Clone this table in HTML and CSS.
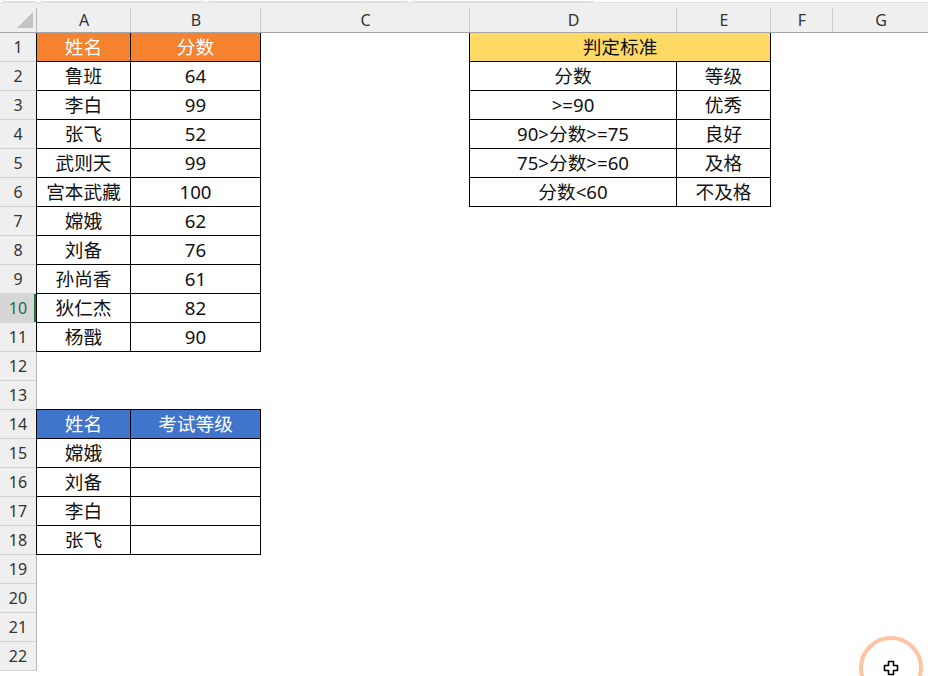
FILE: index.html
```html
<!DOCTYPE html>
<html lang="zh-CN">
<head>
<meta charset="utf-8">
<title>判定标准</title>
<link rel="stylesheet" href="styles.css">
</head>
<body>
<div class="sheet">
  <div class="tabs">
    <span class="tab t1"></span><span class="tab t2"></span><span class="tab t3"></span><span class="tab t4"></span>
  </div>
  <div class="colheads">
    <div class="corner"><span class="tri"></span></div>
    <div class="ch w-a">A</div>
    <div class="ch w-b">B</div>
    <div class="ch w-c">C</div>
    <div class="ch w-d">D</div>
    <div class="ch w-e">E</div>
    <div class="ch w-f">F</div>
    <div class="ch w-g">G</div>
  </div>
  <div class="body">
    <div class="rowheads">
      <div class="rh">1</div><div class="rh">2</div><div class="rh">3</div><div class="rh">4</div>
      <div class="rh">5</div><div class="rh">6</div><div class="rh">7</div><div class="rh">8</div>
      <div class="rh">9</div><div class="rh sel">10</div><div class="rh">11</div><div class="rh">12</div>
      <div class="rh">13</div><div class="rh">14</div><div class="rh">15</div><div class="rh">16</div>
      <div class="rh">17</div><div class="rh">18</div><div class="rh">19</div><div class="rh">20</div>
      <div class="rh">21</div><div class="rh">22</div>
    </div>
    <div class="cells">
      <div class="tbl tbl-score">
        <div class="c hd-orange">姓名</div><div class="c hd-orange">分数</div>
        <div class="c">鲁班</div><div class="c">64</div>
        <div class="c">李白</div><div class="c">99</div>
        <div class="c">张飞</div><div class="c">52</div>
        <div class="c">武则天</div><div class="c">99</div>
        <div class="c">宫本武藏</div><div class="c">100</div>
        <div class="c">嫦娥</div><div class="c">62</div>
        <div class="c">刘备</div><div class="c">76</div>
        <div class="c">孙尚香</div><div class="c">61</div>
        <div class="c">狄仁杰</div><div class="c">82</div>
        <div class="c">杨戬</div><div class="c">90</div>
      </div>
      <div class="tbl tbl-rule">
        <div class="c hd-yellow span2">判定标准</div>
        <div class="c">分数</div><div class="c">等级</div>
        <div class="c">&gt;=90</div><div class="c">优秀</div>
        <div class="c">90&gt;分数&gt;=75</div><div class="c">良好</div>
        <div class="c">75&gt;分数&gt;=60</div><div class="c">及格</div>
        <div class="c">分数&lt;60</div><div class="c">不及格</div>
      </div>
      <div class="tbl tbl-grade">
        <div class="c hd-blue">姓名</div><div class="c hd-blue">考试等级</div>
        <div class="c">嫦娥</div><div class="c"></div>
        <div class="c">刘备</div><div class="c"></div>
        <div class="c">李白</div><div class="c"></div>
        <div class="c">张飞</div><div class="c"></div>
      </div>
    </div>
  </div>
  <div class="pointer-ring"></div>
  <svg class="pointer" width="16" height="16" viewBox="0 0 16 16" aria-hidden="true">
    <path d="M5.5 1.5 H10.5 V5.5 H14.5 V10.5 H10.5 V14.5 H5.5 V10.5 H1.5 V5.5 H5.5 Z" fill="#fff" stroke="#000" stroke-width="1.6" stroke-linejoin="round"/>
  </svg>
</div>
</body>
</html>
```

FILE: styles.css
```css
* { box-sizing: border-box; }
html, body {
  margin: 0;
  padding: 0;
  background: #fff;
  overflow: hidden;
}
.sheet {
  position: relative;
  width: 928px;
  height: 676px;
  overflow: hidden;
  font-family: "Noto Sans", "Noto Sans CJK SC", sans-serif;
}

/* top strip with faint tab outlines */
.tabs {
  height: 3px;
  display: flex;
  gap: 5px;
  padding-left: 3px;
  background: #fff;
  border-bottom: 1px solid #e2e2e2;
}
.tab {
  display: block;
  height: 2px;
  border: 1px solid #dcdcdc;
  border-top: none;
  border-radius: 0 0 3px 3px;
}
.t1 { width: 33px; }
.t2 { width: 162px; }
.t3 { width: 200px; }
.t4 { width: 180px; }

/* column headers */
.colheads {
  display: flex;
  height: 30px;
  background: #efefef;
  border-bottom: 1px solid #a5a5a5;
}
.corner, .ch {
  position: relative;
  flex: none;
}
.corner { width: 37px; }
.corner::after, .ch::after {
  content: "";
  position: absolute;
  right: 0;
  top: 5px;
  bottom: 0;
  width: 1px;
  background: #c9c9c9;
}
.corner::after { background: #b4b4b4; }
.tri {
  position: absolute;
  left: 17px;
  top: 9px;
  width: 0;
  height: 0;
  border-left: 16px solid transparent;
  border-bottom: 16px solid #c3c3c3;
}
.ch {
  padding-top: 6px;
  text-align: center;
  font-size: 16px;
  line-height: 23px;
  color: #333;
}
.w-a { width: 94px; }
.w-b { width: 130px; }
.w-c { width: 209px; }
.w-d { width: 207px; }
.w-e { width: 94px; }
.w-f { width: 62px; }
.w-g { width: 96px; }

/* body */
.body {
  display: flex;
}
.rowheads {
  flex: none;
  width: 37px;
  background: #efefef;
  border-right: 1px solid #b4b4b4;
}
.rh {
  height: 29px;
  border-bottom: 1px solid #d2d2d2;
  text-align: center;
  font-size: 16px;
  line-height: 29px;
  color: #333;
}
.rh.sel {
  background: #d6d6d6;
  color: #1f6b43;
  box-shadow: inset -2px 0 0 #217346;
}

.cells {
  display: grid;
  grid-template-columns: 94px 130px 209px 207px 94px 62px 96px;
  grid-template-rows: repeat(22, 29px);
}

/* bordered tables */
.tbl {
  display: grid;
  gap: 1px;
  background: #000;
  margin-left: -1px;
  padding: 0 1px 1px 1px;
  align-self: start;
}
.tbl-score {
  grid-column: 1 / 3;
  grid-row: 1 / 12;
  grid-template-columns: 93px 129px;
  grid-auto-rows: 28px;
}
.tbl-rule {
  grid-column: 4 / 6;
  grid-row: 1 / 7;
  grid-template-columns: 206px 93px;
  grid-auto-rows: 28px;
}
.tbl-grade {
  grid-column: 1 / 3;
  grid-row: 14 / 19;
  grid-template-columns: 93px 129px;
  grid-auto-rows: 28px;
  margin-top: -1px;
  padding-top: 1px;
}
.c {
  background: #fff;
  color: #111;
  font-size: 18.67px;
  line-height: 28px;
  text-align: center;
  white-space: nowrap;
}
.span2 { grid-column: 1 / 3; }
.hd-orange { background: #f4822f; color: #fff; }
.hd-yellow { background: #ffd966; color: #111; }
.hd-blue { background: #4174cb; color: #fff; }

/* pointer highlight overlay */
.pointer-ring {
  position: absolute;
  left: 859px;
  top: 636px;
  width: 64px;
  height: 64px;
  border: 4px solid #ffc4a2;
  border-radius: 50%;
}
.pointer {
  position: absolute;
  left: 883px;
  top: 660px;
}
```
